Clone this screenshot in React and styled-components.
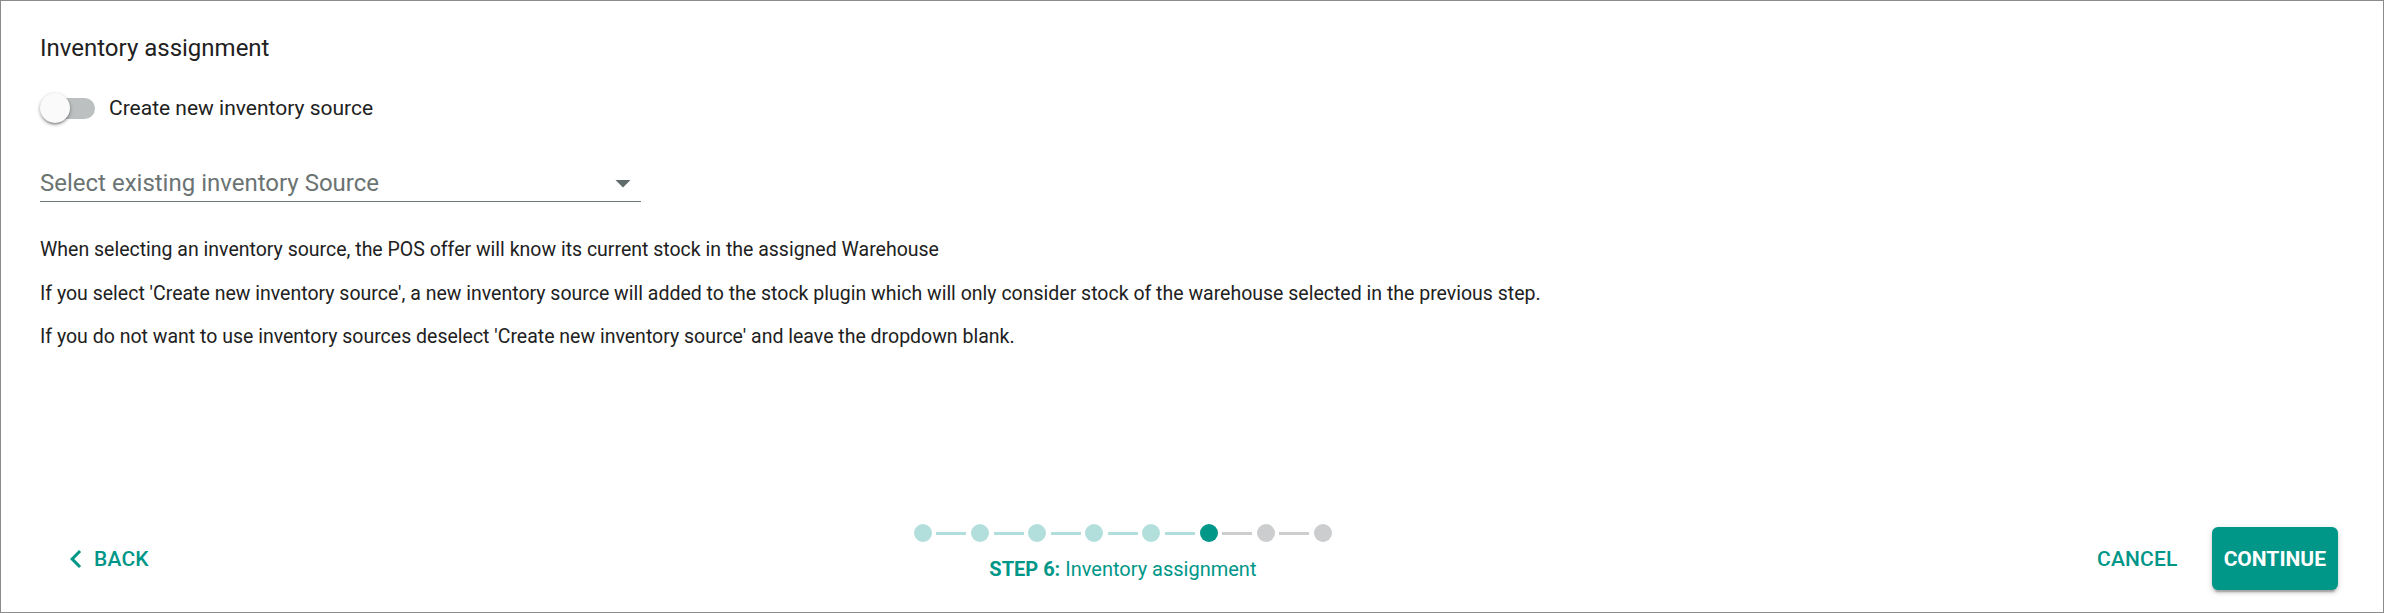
import React from 'react'
import styled, { createGlobalStyle } from 'styled-components'

const GlobalStyle = createGlobalStyle`
  html, body { margin: 0; padding: 0; background: #fff; }
  body { font-family: Roboto, "Liberation Sans", sans-serif; }
  * { box-sizing: border-box; }
`

const steps = ['done', 'done', 'done', 'done', 'done', 'active', 'todo', 'todo']

const App = () => {
  return (
    <>
      <GlobalStyle />
      <Page>
        <Content>
          <Title>Inventory assignment</Title>
          <ToggleRow>
            <SwitchRoot>
              <Track />
              <Thumb />
            </SwitchRoot>
            <ToggleLabel>Create new inventory source</ToggleLabel>
          </ToggleRow>
          <SelectBox>
            <Placeholder>Select existing inventory Source</Placeholder>
            <ArrowIcon viewBox="0 0 24 24">
              <path d="M7 10l5 5 5-5z" fill="currentColor" />
            </ArrowIcon>
          </SelectBox>
          <Help>
            <Para>When selecting an inventory source, the POS offer will know its current stock in the assigned Warehouse</Para>
            <Para>If you select 'Create new inventory source', a new inventory source will added to the stock plugin which will only consider stock of the warehouse selected in the previous step.</Para>
            <Para>If you do not want to use inventory sources deselect 'Create new inventory source' and leave the dropdown blank.</Para>
          </Help>
        </Content>
        <Footer>
          <TextButton>
            <ChevronIcon viewBox="0 0 24 24">
              <path d="M15.41 7.41L14 6l-6 6 6 6 1.41-1.41L10.83 12z" fill="currentColor" />
            </ChevronIcon>
            BACK
          </TextButton>
          <Stepper>
            <Dots>
              {steps.map((s, i) => (
                <React.Fragment key={i}>
                  {i > 0 && <Connector $state={s === 'todo' ? 'todo' : 'done'} />}
                  <Dot $state={s} />
                </React.Fragment>
              ))}
            </Dots>
            <StepLabel><b>STEP 6:</b> Inventory assignment</StepLabel>
          </Stepper>
          <Actions>
            <TextButton>CANCEL</TextButton>
            <PrimaryButton>CONTINUE</PrimaryButton>
          </Actions>
        </Footer>
      </Page>
    </>
  )
}

const Page = styled.div`
  width: 2384px;
  height: 613px;
  border: 1px solid #8c8c8c;
  display: flex;
  flex-direction: column;
  color: #212121;
`
const Content = styled.div`
  flex: 1;
  padding: 29px 39px 0;
`
const Title = styled.div`
  font-size: 24px;
  line-height: 36px;
`
const ToggleRow = styled.div`
  display: flex;
  align-items: center;
  margin-top: 24px;
  margin-left: -18px;
  height: 36px;
`
const SwitchRoot = styled.div`
  position: relative;
  width: 87px;
  height: 36px;
`
const Track = styled.div`
  position: absolute;
  left: 22px;
  top: 7.5px;
  width: 51px;
  height: 21px;
  border-radius: 10.5px;
  background: #bcc0c0;
`
const Thumb = styled.div`
  position: absolute;
  left: 18px;
  top: 3px;
  width: 30px;
  height: 30px;
  border-radius: 50%;
  background: #fafafa;
  box-shadow: 0 1.5px 3px rgba(0,0,0,.25), 0 1.5px 4.5px rgba(0,0,0,.18), 0 3px 1.5px -1.5px rgba(0,0,0,.15);
`
const ToggleLabel = styled.span`
  font-size: 21px;
  line-height: 30px;
`
const SelectBox = styled.div`
  width: 601px;
  margin-top: 45px;
  display: flex;
  align-items: flex-start;
  justify-content: space-between;
  border-bottom: 1px solid #6f7979;
  height: 31px;
`
const Placeholder = styled.span`
  font-size: 24px;
  line-height: 24px;
  color: #6b7373;
`
const ArrowIcon = styled.svg`
  width: 36px;
  height: 36px;
  margin-top: -6px;
  color: #5f6a6a;
  flex-shrink: 0;
`
const Help = styled.div`
  margin-top: 34px;
  display: flex;
  flex-direction: column;
  gap: 16.5px;
`
const Para = styled.p`
  margin: 0;
  font-size: 19.5px;
  line-height: 27px;
`
const Footer = styled.div`
  display: flex;
  align-items: center;
  justify-content: space-between;
  padding: 0 45px 19px;
`
const TextButton = styled.button`
  display: inline-flex;
  align-items: center;
  height: 63px;
  padding: 0 12px;
  border: none;
  background: none;
  font-family: Roboto, "Liberation Sans", sans-serif;
  font-size: 21px;
  font-weight: 500;
  color: #009688;
  letter-spacing: 0.2px;
`
const ChevronIcon = styled.svg`
  width: 36px;
  height: 36px;
`
const Stepper = styled.div`
  display: flex;
  flex-direction: column;
  align-items: center;
  padding-bottom: 9px;
`
const Dots = styled.div`
  display: flex;
  align-items: center;
  height: 18px;
`
const dotColor = { done: '#b2dfdc', active: '#009688', todo: '#cbcdce' }
const Dot = styled.div`
  width: 18px;
  height: 18px;
  border-radius: 50%;
  background: ${p => dotColor[p.$state]};
`
const Connector = styled.div`
  width: 30px;
  height: 3px;
  margin: 0 4.6px;
  background: ${p => dotColor[p.$state]};
`
const StepLabel = styled.div`
  margin-top: 12px;
  font-size: 20px;
  line-height: 30px;
  color: #009688;
  b { font-weight: 700; }
`
const Actions = styled.div`
  display: flex;
  align-items: center;
  gap: 22px;
`
const PrimaryButton = styled.button`
  height: 63px;
  padding: 0 12px;
  border: none;
  border-radius: 6px;
  background: #009688;
  color: #fff;
  font-family: Roboto, "Liberation Sans", sans-serif;
  font-size: 21px;
  font-weight: 700;
  letter-spacing: 0;
  box-shadow: 0 4.5px 1.5px -3px rgba(0,0,0,.2), 0 3px 3px 0 rgba(0,0,0,.14), 0 1.5px 7.5px 0 rgba(0,0,0,.12);
`

export default App
